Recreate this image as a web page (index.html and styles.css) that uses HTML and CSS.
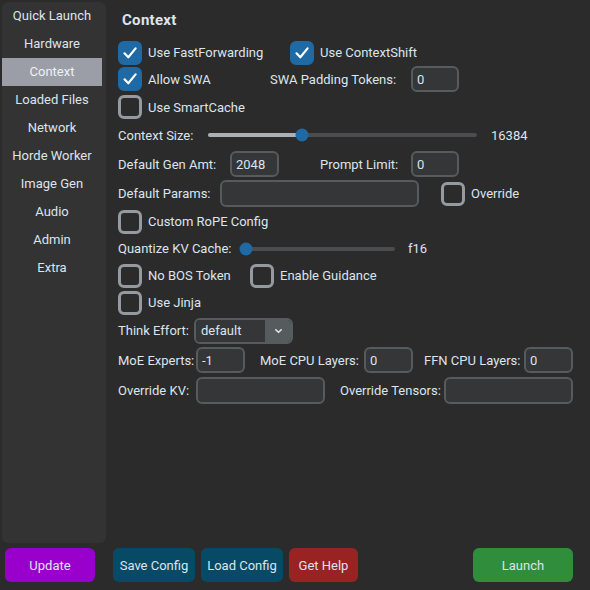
FILE: index.html
```html
<!DOCTYPE html>
<html lang="en">
<head>
  <meta charset="UTF-8">
  <title>KoboldCpp - Context</title>
  <link rel="stylesheet" href="styles.css">
</head>
<body>

<div class="app">
  <div class="top">
    <nav class="sidebar">
      <div class="tab">Quick Launch</div>
      <div class="tab">Hardware</div>
      <div class="tab active">Context</div>
      <div class="tab">Loaded Files</div>
      <div class="tab">Network</div>
      <div class="tab">Horde Worker</div>
      <div class="tab">Image Gen</div>
      <div class="tab">Audio</div>
      <div class="tab">Admin</div>
      <div class="tab">Extra</div>
    </nav>

    <main class="content">
      <div class="title">Context</div>
      <div class="form">

        <div class="row">
          <label class="check w172"><span class="box on"><svg viewBox="0 0 24 24"><path d="M6.5 12.3 L10.3 16.3 L17.6 7.4"/></svg></span>Use FastForwarding</label>
          <label class="check"><span class="box on"><svg viewBox="0 0 24 24"><path d="M6.5 12.3 L10.3 16.3 L17.6 7.4"/></svg></span>Use ContextShift</label>
        </div>

        <div class="row">
          <label class="check w152"><span class="box on"><svg viewBox="0 0 24 24"><path d="M6.5 12.3 L10.3 16.3 L17.6 7.4"/></svg></span>Allow SWA</label>
          <span class="lbl w141">SWA Padding Tokens:</span>
          <input class="field w48" value="0">
        </div>

        <div class="row">
          <label class="check"><span class="box"></span>Use SmartCache</label>
        </div>

        <div class="row">
          <span class="lbl w90">Context Size:</span>
          <div class="slider w269">
            <div class="fill" style="width:35%"></div>
            <div class="thumb" style="left:35%"></div>
          </div>
          <span class="value">16384</span>
        </div>

        <div class="row">
          <span class="lbl w112">Default Gen Amt:</span>
          <input class="field w49" value="2048">
          <span class="lbl w91 ml41">Prompt Limit:</span>
          <input class="field w48" value="0">
        </div>

        <div class="row">
          <span class="lbl w102">Default Params:</span>
          <input class="field w199 h27" value="">
          <label class="check ml22"><span class="box"></span>Override</label>
        </div>

        <div class="row">
          <label class="check"><span class="box"></span>Custom RoPE Config</label>
        </div>

        <div class="row">
          <span class="lbl w122">Quantize KV Cache:</span>
          <div class="slider w155">
            <div class="fill" style="width:4%"></div>
            <div class="thumb" style="left:4%"></div>
          </div>
          <span class="value short">f16</span>
        </div>

        <div class="row">
          <label class="check w132"><span class="box"></span>No BOS Token</label>
          <label class="check"><span class="box"></span>Enable Guidance</label>
        </div>

        <div class="row">
          <label class="check"><span class="box"></span>Use Jinja</label>
        </div>

        <div class="row">
          <span class="lbl w76">Think Effort:</span>
          <div class="combo">
            <span class="combo-text">default</span>
            <span class="combo-btn"><svg viewBox="0 0 10 6"><path d="M1.5 1.2 L5 4.5 L8.5 1.2"/></svg></span>
          </div>
        </div>

        <div class="row">
          <span class="lbl w78">MoE Experts:</span>
          <input class="field w49" value="-1">
          <span class="lbl w104 ml15">MoE CPU Layers:</span>
          <input class="field w49" value="0">
          <span class="lbl w100 ml11">FFN CPU Layers:</span>
          <input class="field w49" value="0">
        </div>

        <div class="row">
          <span class="lbl w78">Override KV:</span>
          <input class="field w129 h27" value="">
          <span class="lbl w104 ml15">Override Tensors:</span>
          <input class="field w129 h27" value="">
        </div>

      </div>
    </main>
  </div>

  <div class="footer">
    <button class="btn update">Update</button>
    <button class="btn config save">Save Config</button>
    <button class="btn config">Load Config</button>
    <button class="btn help">Get Help</button>
    <button class="btn launch">Launch</button>
  </div>
</div>

</body>
</html>
```

FILE: styles.css
```css
* {
  margin: 0;
  padding: 0;
  box-sizing: border-box;
}

body {
  background-color: #2b2b2b;
  color: #dce4ee;
  font-family: Roboto, "Liberation Sans", sans-serif;
  font-size: 13px;
}

.app {
  width: 590px;
  height: 590px;
  display: flex;
  flex-direction: column;
}

.top {
  display: flex;
  height: 545px;
  padding-top: 2px;
}

/* left tab list */
.sidebar {
  width: 104px;
  height: 541px;
  margin-left: 2px;
  background-color: #333333;
  border-radius: 6px;
}

.tab {
  width: 100px;
  height: 28px;
  line-height: 28px;
  text-align: center;
  color: #dce4ee;
}

.tab.active {
  background-color: #9b9ea7;
  color: #eef1f5;
}

/* main panel */
.content {
  flex: 1;
  padding-left: 12px;
}

.title {
  height: 38px;
  line-height: 36px;
  padding-left: 4px;
  font-size: 15px;
  font-weight: bold;
  letter-spacing: 0.3px;
}

.form {
  display: grid;
  grid-template-rows: 25px 28px 28px 28px 30px 29px 27px 27px 27px 27px 29px 30px 30px;
}

.row {
  display: flex;
  align-items: center;
}

.lbl {
  white-space: nowrap;
}

.check {
  display: flex;
  align-items: center;
  gap: 6px;
  white-space: nowrap;
}

.box {
  width: 24px;
  height: 24px;
  border-radius: 6px;
  border: 3px solid #949a9f;
  flex-shrink: 0;
}

.box.on {
  background-color: #1f6aa5;
  border-color: #1f6aa5;
  display: flex;
  align-items: center;
  justify-content: center;
}

.box svg {
  width: 24px;
  height: 24px;
  flex-shrink: 0;
}

.box svg path {
  fill: none;
  stroke: #ffffff;
  stroke-width: 2.2;
  stroke-linecap: round;
  stroke-linejoin: round;
}

.field {
  height: 26px;
  background-color: #343638;
  border: 2px solid #565b5e;
  border-radius: 6px;
  color: #dce4ee;
  font-family: Roboto, "Liberation Sans", sans-serif;
  font-size: 13px;
  padding-left: 4px;
  outline: none;
}

.h27 {
  height: 27px;
}

.slider {
  position: relative;
  height: 4px;
  background-color: #4a4d50;
  border-radius: 2px;
}

.slider .fill {
  height: 4px;
  background-color: #aab0b5;
  border-radius: 2px;
}

.slider .thumb {
  position: absolute;
  top: 50%;
  width: 13px;
  height: 13px;
  border-radius: 50%;
  background-color: #1f6aa5;
  transform: translate(-50%, -50%);
}

.value {
  margin-left: 14px;
}

.value.short {
  margin-left: 13px;
}

.combo {
  display: flex;
  width: 99px;
  height: 26px;
  border: 2px solid #565b5e;
  border-radius: 6px;
  overflow: hidden;
}

.combo-text {
  flex: 1;
  background-color: #343638;
  padding-left: 5px;
  line-height: 22px;
}

.combo-btn {
  width: 26px;
  background-color: #565b5e;
  display: flex;
  align-items: center;
  justify-content: center;
}

.combo-btn svg {
  width: 9px;
  height: 6px;
}

.combo-btn svg path {
  fill: none;
  stroke: #dce4ee;
  stroke-width: 1.6;
}

/* widths / offsets */
.w48 { width: 48px; }
.w49 { width: 49px; }
.w76 { width: 76px; }
.w78 { width: 78px; }
.w90 { width: 90px; }
.w91 { width: 91px; }
.w100 { width: 100px; }
.w102 { width: 102px; }
.w104 { width: 104px; }
.w112 { width: 112px; }
.w122 { width: 122px; }
.w129 { width: 129px; }
.w132 { width: 132px; }
.w141 { width: 141px; }
.w152 { width: 152px; }
.w155 { width: 155px; }
.w172 { width: 172px; }
.w199 { width: 199px; }
.w269 { width: 269px; }
.ml11 { margin-left: 11px; }
.ml15 { margin-left: 15px; }
.ml22 { margin-left: 22px; }
.ml41 { margin-left: 41px; }

/* bottom buttons */
.footer {
  display: flex;
  align-items: center;
  padding: 3px 17px 0 5px;
  gap: 6px;
}

.btn {
  height: 34px;
  border: none;
  border-radius: 6px;
  color: #dce4ee;
  font-family: Roboto, "Liberation Sans", sans-serif;
  font-size: 13px;
}

.update {
  width: 90px;
  background-color: #9900cc;
}

.config {
  width: 82px;
  background-color: #084a66;
}

.save {
  margin-left: 12px;
}

.help {
  width: 69px;
  background-color: #992222;
}

.launch {
  width: 100px;
  margin-left: auto;
  background-color: #2f8d3c;
}
```
